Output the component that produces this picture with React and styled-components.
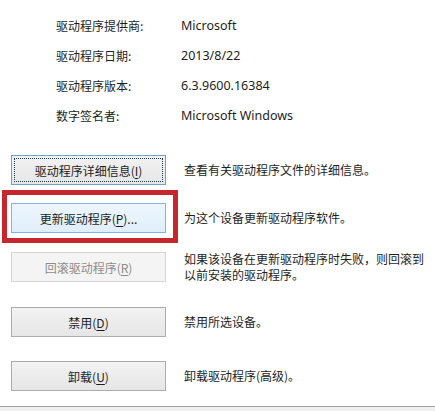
import React from 'react';
import styled, { createGlobalStyle, css } from 'styled-components';

const GlobalStyle = createGlobalStyle`
	html, body {
		margin: 0;
		padding: 0;
		background: #ffffff;
	}
	body {
		font-family: "Noto Sans", "Noto Sans CJK SC", sans-serif;
		font-size: 12px;
		color: #1e1e1e;
	}
`

const Page = styled.div`
	width: 435px;
	height: 411px;
	display: flex;
	flex-direction: column;
	overflow: hidden;
`

const InfoTable = styled.div`
	padding: 11px 0 0 56px;
`

const InfoRow = styled.div`
	display: grid;
	grid-template-columns: 125px 1fr;
	height: 30px;
	line-height: 30px;
`

const InfoLabel = styled.span`
	font-family: "Noto Sans CJK SC", sans-serif;
`

const InfoValue = styled.span`
	font-family: "Noto Sans", "Noto Sans CJK SC", sans-serif;
	font-size: 12.5px;
`

const Actions = styled.div`
	padding-left: 11px;
	margin-top: 24px;
`

const ActionRow = styled.div`
	display: flex;
	align-items: center;
	gap: 18px;
	margin-top: ${props => props.$spacing}px;
`

const ButtonCell = styled.div`
	position: relative;
	flex: 0 0 155px;
`

const Highlight = styled.span`
	position: absolute;
	top: -13px;
	left: -9px;
	right: -12px;
	bottom: -10px;
	border: 5px solid #c6262d;
	pointer-events: none;
`

const variants = {
	normal: css`
		background: linear-gradient(#f2f2f2, #e6e6e6);
		border-color: #acacac;
		color: #1e1e1e;
	`,
	focused: css`
		background: linear-gradient(#f2f2f2, #e6e6e6);
		border-color: #6f9fcf;
		color: #1e1e1e;
		&::after {
			content: "";
			position: absolute;
			inset: 2px;
			border: 1px dotted #1e3c5c;
		}
	`,
	hover: css`
		background: linear-gradient(#eef6fd, #e0eefb);
		border-color: #7eb4ea;
		color: #1e1e1e;
	`,
	disabled: css`
		background: #f4f4f4;
		border-color: #d5d5d5;
		color: #8c8c8c;
	`,
}

const Button = styled.button`
	position: relative;
	display: block;
	width: 155px;
	height: 30px;
	padding: 0;
	border: 1px solid;
	font-family: "Noto Sans CJK SC", sans-serif;
	font-size: 12px;
	cursor: default;
	${props => variants[props.$variant]}
`

const Key = styled.span`
	text-decoration: underline;
	text-underline-offset: 2px;
`

const Description = styled.div`
	font-family: "Noto Sans CJK SC", sans-serif;
	font-size: 12px;
	line-height: 16px;
	white-space: nowrap;
`

const Footer = styled.div`
	margin-top: auto;
	height: 4px;
	border-top: 1px solid #a0a0a0;
	background: #f0f0f0;
`

const info = [
	{ label: '驱动程序提供商:', value: 'Microsoft' },
	{ label: '驱动程序日期:', value: '2013/8/22' },
	{ label: '驱动程序版本:', value: '6.3.9600.16384' },
	{ label: '数字签名者:', value: 'Microsoft Windows' },
]

const actions = [
	{ text: '驱动程序详细信息(', key: 'I', tail: ')', variant: 'focused', spacing: 0, desc: ['查看有关驱动程序文件的详细信息。'] },
	{ text: '更新驱动程序(', key: 'P', tail: ')...', variant: 'hover', spacing: 18, highlight: true, desc: ['为这个设备更新驱动程序软件。'] },
	{ text: '回滚驱动程序(', key: 'R', tail: ')', variant: 'disabled', spacing: 18, desc: ['如果该设备在更新驱动程序时失败，则回滚到', '以前安装的驱动程序。'] },
	{ text: '禁用(', key: 'D', tail: ')', variant: 'normal', spacing: 24, desc: ['禁用所选设备。'] },
	{ text: '卸载(', key: 'U', tail: ')', variant: 'normal', spacing: 24, desc: ['卸载驱动程序(高级)。'] },
]

export default function App() {
	return (
		<Page>
			<GlobalStyle />
			<InfoTable>
				{info.map((row, index) => (
					<InfoRow key={index}>
						<InfoLabel>{row.label}</InfoLabel>
						<InfoValue>{row.value}</InfoValue>
					</InfoRow>
				))}
			</InfoTable>
			<Actions>
				{actions.map((action, index) => (
					<ActionRow key={index} $spacing={action.spacing}>
						<ButtonCell>
							<Button $variant={action.variant} disabled={action.variant === 'disabled'}>
								{action.text}<Key>{action.key}</Key>{action.tail}
							</Button>
							{action.highlight && <Highlight />}
						</ButtonCell>
						<Description>
							{action.desc.map((line, i) => (
								<div key={i}>{line}</div>
							))}
						</Description>
					</ActionRow>
				))}
			</Actions>
			<Footer />
		</Page>
	);
}
